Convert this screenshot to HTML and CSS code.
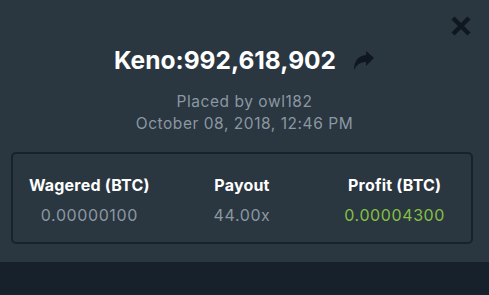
FILE: index.html
```html
<!DOCTYPE html>
<html>
<head>
<meta charset="utf-8">
<link rel="stylesheet" href="styles.css">
</head>
<body>
<div class="modal">
  <button class="close" aria-label="Close">
    <svg width="22" height="22" viewBox="0 0 22 22"><path d="M3 3 L19 19 M19 3 L3 19" stroke="#0f1820" stroke-width="4.5" stroke-linecap="butt"/></svg>
  </button>
  <div class="title-row">
    <h1 class="title">Keno:992,618,902</h1>
    <svg class="share" width="22" height="20" viewBox="0 0 22 20"><path d="M21 7 L13 0 L13 4 C5 5 1 10 1 19 C4 13 8 11 13 11 L13 15 Z" fill="#0f1820"/></svg>
  </div>
  <div class="meta">
    <div>Placed by owl182</div>
    <div>October 08, 2018, 12:46 PM</div>
  </div>
  <div class="stats">
    <div class="col"><div class="label">Wagered (BTC)</div><div class="value">0.00000100</div></div>
    <div class="col"><div class="label">Payout</div><div class="value">44.00x</div></div>
    <div class="col"><div class="label">Profit (BTC)</div><div class="value green">0.00004300</div></div>
  </div>
</div>
<div class="footer"></div>
</body>
</html>
```
FILE: styles.css
```css
html, body { margin: 0; padding: 0; }
body {
  width: 489px; height: 295px; overflow: hidden;
  background: #17212b;
  font-family: Inter, "Noto Sans", sans-serif;
}
.modal {
  position: relative;
  background: #2a3640;
  height: 262px;
  box-sizing: border-box;
  padding: 44px 16px 0 16px;
}
.close {
  position: absolute; top: 15px; right: 17px;
  background: none; border: 0; padding: 0; width: 22px; height: 22px;
}
.close svg { display: block; }
.title-row {
  display: flex; justify-content: center; align-items: center; gap: 17px;
  margin-left: 0;
}
.title {
  margin: 0; color: #ffffff; font-size: 24.5px; font-weight: 700; line-height: 32px;
  letter-spacing: 0;
}
.share { display: block; margin-top: 2px; }
.meta {
  margin-top: 15px;
  text-align: center; color: #8b98a2; font-size: 15.5px; line-height: 22px;
  letter-spacing: 0.55px;
}
.stats {
  margin: 17px 0 0 -5px;
  width: 462px; height: 92px; box-sizing: border-box;
  border: 2px solid #18222b; border-radius: 5px;
  display: grid; grid-template-columns: 1fr 1fr 1fr;
  align-content: center;
  padding-top: 4px;
}
.col { text-align: center; }
.label { color: #ffffff; font-weight: 700; font-size: 16px; line-height: 20px; letter-spacing: 0.2px; }
.value { color: #8b98a2; font-size: 16px; line-height: 20px; margin-top: 10px; letter-spacing: 0.6px; }
.value.green { color: #84c043; }
```
